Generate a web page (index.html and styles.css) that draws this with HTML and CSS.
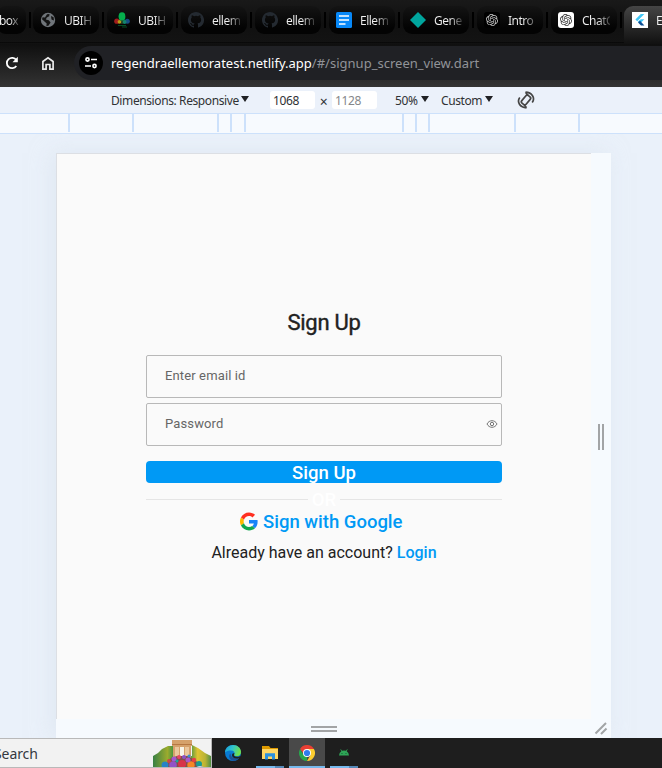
FILE: index.html
```html
<!DOCTYPE html>
<html lang="en">
<head>
<meta charset="utf-8">
<title>Sign Up</title>
<link rel="stylesheet" href="styles.css">
</head>
<body>
<svg class="defs" width="0" height="0">
  <symbol id="github" viewBox="0 0 16 16"><path fill="#242a31" d="M8 0C3.58 0 0 3.58 0 8c0 3.54 2.29 6.53 5.47 7.59.4.07.55-.17.55-.38v-1.49c-2.01.37-2.53-.49-2.69-.94-.09-.23-.48-.94-.82-1.13-.28-.15-.68-.52-.01-.53.63-.01 1.08.58 1.23.82.72 1.21 1.87.87 2.33.66.07-.52.28-.87.51-1.07-1.78-.2-3.64-.89-3.64-3.95 0-.87.31-1.59.82-2.15-.08-.2-.36-1.02.08-2.12 0 0 .67-.21 2.2.82a7.6 7.6 0 0 1 4 0c1.53-1.04 2.2-.82 2.2-.82.44 1.1.16 1.92.08 2.12.51.56.82 1.27.82 2.15 0 3.07-1.87 3.75-3.65 3.95.29.25.54.73.54 1.48v2.2c0 .21.15.46.55.38A8 8 0 0 0 8 0z"/></symbol>
  <symbol id="knot" viewBox="0 0 24 24"><path fill="currentColor" d="M22.28 9.82a5.98 5.98 0 0 0-.52-4.91 6.05 6.05 0 0 0-6.51-2.9A6.07 6.07 0 0 0 4.98 4.18a5.98 5.98 0 0 0-4 2.9 6.05 6.05 0 0 0 .75 7.1 5.98 5.98 0 0 0 .51 4.91 6.05 6.05 0 0 0 6.51 2.9A5.98 5.98 0 0 0 13.26 24a6.06 6.06 0 0 0 5.77-4.2 5.99 5.99 0 0 0 4-2.9 6.06 6.06 0 0 0-.75-7.08zm-9.02 12.61a4.48 4.48 0 0 1-2.88-1.04l.14-.08 4.78-2.76a.8.8 0 0 0 .39-.68v-6.74l2.02 1.17.04.05v5.58a4.5 4.5 0 0 1-4.49 4.5zM3.6 18.3a4.47 4.47 0 0 1-.53-3.01l.14.08 4.78 2.76a.77.77 0 0 0 .78 0l5.84-3.37v2.33l-.03.06L9.74 19.95A4.5 4.5 0 0 1 3.6 18.3zM2.34 7.9a4.48 4.48 0 0 1 2.37-1.97v5.67a.77.77 0 0 0 .39.68l5.81 3.35-2.02 1.17h-.07l-4.83-2.79A4.5 4.5 0 0 1 2.34 7.87zm16.6 3.85-5.83-3.38 2.01-1.17h.07l4.83 2.79a4.49 4.49 0 0 1-.67 8.11v-5.68a.79.79 0 0 0-.41-.67zm2.01-3.02-.14-.08-4.77-2.78a.78.78 0 0 0-.79 0L9.41 9.23V6.9l.03-.06 4.83-2.79a4.5 4.5 0 0 1 6.68 4.66zM8.31 12.86l-2.02-1.16-.04-.06V6.07a4.5 4.5 0 0 1 7.38-3.45l-.14.08-4.78 2.76a.8.8 0 0 0-.39.68zm1.1-2.36 2.6-1.5 2.61 1.5v3l-2.6 1.5-2.61-1.5z"/></symbol>
</svg>
<header class="tabs">
  <div class="tab first"><span>box</span></div>
  <div class="tab"><svg viewBox="0 0 16 16"><circle cx="8" cy="8" r="7.2" fill="#70757a"/><path fill="#141414" d="M7 2.2 9.5 2l-.3 2.2-2.4 1.2-1 2.1 3 .7 1.8 2.2-2.2 3.3-2 .3.3-2.6L4.5 9.6 2 7.2 2.6 5.2 5 5.5zM11 4l2.6 1.3.3 3.2-2.4-1z"/></svg><span>UBIH</span></div>
  <div class="tab"><svg viewBox="0 0 16 16"><circle cx="2.8" cy="9.2" r="2.6" fill="#a11c1c"/><circle cx="13.3" cy="9.2" r="2.5" fill="#164c83"/><circle cx="5.5" cy="9.8" r="1.9" fill="#b49b16"/><circle cx="10.5" cy="10" r="2" fill="#14846c"/><ellipse cx="8" cy="4.5" rx="3.4" ry="4.3" fill="#05ae4d"/><path d="M8 8v4" stroke="#35663b"/><path d="M4 13.5h8M8 15h5" stroke="#064d25"/></svg><span>UBIH</span></div>
  <div class="tab"><svg><use href="#github"/></svg><span>ellem</span></div>
  <div class="tab"><svg><use href="#github"/></svg><span>ellem</span></div>
  <div class="tab"><svg viewBox="0 0 16 16"><rect width="16" height="16" rx="1.5" fill="#0788f8"/><path d="M3 4h10M3 8h10M3 12h6.5" stroke="#fff" stroke-width="1.7"/></svg><span>Ellem</span></div>
  <div class="tab"><svg viewBox="0 0 16 16"><path d="m8 0 8 8-8 8-8-8z" fill="#00a59d"/></svg><span>Gene</span></div>
  <div class="tab"><svg class="knot dark"><use href="#knot"/></svg><span>Intro</span></div>
  <div class="tab"><svg class="knot light"><use href="#knot"/></svg><span>ChatG</span></div>
  <div class="tab active"><svg viewBox="0 0 16 16"><path fill="#fff" d="M0 0h16v16H0z"/><path fill="#41c7f5" d="M8.8 2h3.6L5.2 9.2 3.4 7.4zM8.8 7.3h3.6l-3 3-2.4.2-1-1z"/><path fill="#0b4f96" d="m6 10.5 2-1.8 4.4 4.8H9z"/></svg><span>E</span></div>
</header>
<nav class="toolbar">
  <svg class="reload" viewBox="0 0 14 14"><path d="M11.3 10A5.2 5.2 0 1 1 11.3 4" fill="none" stroke="#fff" stroke-width="1.8"/><path fill="#fff" d="M12.8.8v5.4H7.500z"/></svg>
  <svg class="home" viewBox="0 0 14 15"><path d="M1.9 13.2V5.5L7 1.700l5.100 3.800v7.700H8.900V8.500H5.100v4.700z" fill="none" stroke="#e9e9e9" stroke-width="1.7"/></svg>
  <div class="omnibox">
    <div class="site"><svg viewBox="0 0 14 14"><g fill="none" stroke="#fff" stroke-width="1.6"><circle cx="3.5" cy="3.5" r="1.6"/><path d="M7 3.5h6M1 10h6"/><circle cx="10.5" cy="10" r="1.6"/></g></svg></div>
    <p class="url"><b>regendraellemoratest.netlify.app</b><span>/#/signup_screen_view.dart</span></p>
  </div>
</nav>
<div class="devbar">
  <span class="dim">Dimensions: Responsive</span><i class="caret"></i>
  <span class="num w">1068</span><span class="times">×</span><span class="num h">1128</span>
  <span class="zoom">50%</span><i class="caret"></i>
  <span class="custom">Custom</span><i class="caret"></i>
  <svg class="rotate" viewBox="0 0 18 18"><g fill="none" stroke="#454545" stroke-width="1.7"><rect x="6.2" y="4" width="5.6" height="10" rx="1.8" transform="rotate(40 9 9)"/><path d="M2.8 6.5C-.5 11 3 16.5 9.5 16.8M9.5 16.8 7 13.6M15.2 11.5C18.5 7 15 1.5 8.5 1.2M8.5 1.2 11 4.4"/></g></svg>
</div>
<div class="ruler"><i></i><i></i><i></i><i></i><i></i><i></i><i></i><i></i><i></i><i></i></div>
<main class="stage">
  <div class="device">
    <section class="page">
      <form class="form">
        <h1>Sign Up</h1>
        <div class="field">Enter email id</div>
        <div class="field">Password<svg viewBox="0 0 12 10"><g fill="none" stroke="#757575"><path d="M1 5c2.2-4.4 7.8-4.4 10 0-2.2 4.4-7.8 4.4-10 0z"/><circle cx="6" cy="5" r="1.7"/></g></svg></div>
        <div class="submit">Sign Up</div>
        <div class="or"><i></i><span>OR</span><i></i></div>
        <div class="google"><svg viewBox="0 0 48 48"><path fill="#ff2f20" d="M24 9.5c3.54 0 6.71 1.22 9.21 3.6l6.85-6.85C35.9 2.38 30.47 0 24 0 14.62 0 6.51 5.38 2.56 13.22l7.98 6.19C12.43 13.72 17.74 9.5 24 9.5z"/><path fill="#1683f8" d="M46.98 24.55c0-1.57-.15-3.09-.38-4.55H24v9.02h12.94c-.58 2.96-2.26 5.48-4.78 7.18l7.73 6c4.51-4.18 7.09-10.36 7.09-17.65z"/><path fill="#ffb900" d="M10.53 28.59A14.5 14.5 0 0 1 9.77 24c0-1.6.27-3.14.76-4.59l-7.98-6.19a24 24 0 0 0 0 21.56z"/><path fill="#11a750" d="M24 48c6.48 0 11.93-2.13 15.89-5.81l-7.73-6c-2.15 1.45-4.92 2.3-8.16 2.3-6.26 0-11.57-4.22-13.47-9.91l-7.98 6.19C6.51 42.62 14.62 48 24 48z"/></svg><span>Sign with Google</span></div>
        <p class="login">Already have an account? <b>Login</b></p>
      </form>
    </section>
    <div class="grip right"><i></i><i></i></div>
    <div class="grip bottom"><i></i><i></i></div>
    <svg class="corner" viewBox="0 0 14 14"><path d="M1.5 12.5 12 2M7 13l5.5-5.5" stroke="#a2a4a6" stroke-width="2"/></svg>
  </div>
</main>
<footer class="taskbar">
  <div class="search"><span>Search</span>
    <svg viewBox="0 0 58 28"><defs><linearGradient id="hill"><stop stop-color="#398044"/><stop offset=".25" stop-color="#9cab2d"/><stop offset=".36" stop-color="#3e9143"/><stop offset=".65" stop-color="#529641"/><stop offset=".77" stop-color="#e0c431"/><stop offset=".9" stop-color="#b9b333"/><stop offset="1" stop-color="#528f45"/></linearGradient></defs><path fill="url(#hill)" d="M0 28V16l5-3 4-4 6-3h5v10h19V5l6 3 7 5 6 3v12z"/><path fill="#d5a16b" d="M19 0h20v6h-1v12H20V6h-1z"/><path fill="#b67843" d="M19 4h20v1H19z"/><path fill="#ebc79c" d="M22 7h4v10h-4zM32 7h4v10h-4z"/><path fill="#f7f4e9" d="M27 7h4v11h-4z"/><path fill="#80504b" d="m18 18 6-2h11l8 5 8 7H10z"/><g><circle cx="12" cy="25" r="3.5" fill="#2883c5"/><circle cx="20" cy="25" r="3.8" fill="#9152c7"/><circle cx="29" cy="24" r="4" fill="#d83349"/><circle cx="38" cy="25" r="3.7" fill="#f68623"/><circle cx="46" cy="24" r="3" fill="#1b9a91"/><circle cx="21" cy="19" r="2.5" fill="#a358d1"/><circle cx="26" cy="17" r="2" fill="#e84564"/><circle cx="31" cy="17" r="2" fill="#8c50c8"/><circle cx="35" cy="20" r="2.5" fill="#ae56c9"/><circle cx="41" cy="20" r="2.2" fill="#e73f43"/><circle cx="16" cy="21" r="2" fill="#cf4545"/><circle cx="24" cy="21" r="1.5" fill="#18a6a0"/><circle cx="36" cy="16" r="1.5" fill="#378cd3"/></g><path fill="#c9d1e9" d="M42 28q5-4 10 0z"/></svg>
  </div>
  <div class="app edge"><svg viewBox="0 0 16 16"><defs><linearGradient id="edge" x2="1" y2=".3"><stop stop-color="#179bdc"/><stop offset=".5" stop-color="#30c4cd"/><stop offset="1" stop-color="#70e04d"/></linearGradient></defs><circle cx="8" cy="8" r="8" fill="#087bd2"/><path fill="url(#edge)" d="M0 7.5C0 3 4 0 8 0c5 0 8 3.5 8 7 0 3-2 4.2-4.5 4.2C9 11.2 9 10 9.5 9c.6-2-1-3.6-3.3-3.6C3.5 5.4 1 6 0 7.5z"/><path fill="#1d4f95" d="M5.5 8.5c0 4 3.5 5.5 8.6 4.3C11 17.2 5 16.5 4.2 12c-.2-1.5.3-2.7 1.3-3.5z"/><path fill="#1e2023" d="M9.6 8.5c-1.8 2 .2 4.2 5.4 2.7l1 .8-1.8 1.2c-4.5 1.2-7.2-1-7.2-3 0-1.5 1-2.4 2.6-1.7z"/></svg></div>
  <div class="app running"><svg viewBox="0 0 16 16"><path fill="#de9a00" d="M0 1h7l1.5 2H16v3H0z"/><path fill="#ffd664" d="M0 4h16v10H0z"/><path fill="#2c91de" d="M3 14.5V8.2h10v6.3h-3v-3H6v3z"/></svg></div>
  <div class="app current"><svg viewBox="0 0 16 16"><path fill="#e93f34" d="M1.07 4A8 8 0 0 1 14.93 4H8L5 9.5z"/><path fill="#28a54c" d="M1.07 4 4.7 10 8 12v4A8 8 0 0 1 1.07 4z"/><path fill="#fccd2f" d="M14.93 4A8 8 0 0 1 8 16l3.5-6L8 4z"/><circle cx="8" cy="8" r="4" fill="#fff"/><circle cx="8" cy="8" r="3.1" fill="#307cec"/></svg></div>
  <div class="app running"><svg class="droid" viewBox="0 0 10 7"><path fill="#2fa657" d="M0 6.5Q.2 3.5 2.3 2.3L1.3.5l.6-.3 1.1 1.6q2-.7 4 0L8.1.2l.6.3-1 1.8Q9.8 3.5 10 6.5z"/><circle cx="3" cy="4.5" r=".6" fill="#153"/><circle cx="7" cy="4.5" r=".6" fill="#153"/></svg></div>
</footer>
</body>
</html>
```

FILE: styles.css
```css
* { box-sizing: border-box; }
body { margin: 0; width: 662px; height: 768px; overflow: hidden; background: #eaf1fa; font-family: "Noto Sans", "Open Sans", sans-serif; display: flex; flex-direction: column; }
svg { display: block; flex: none; }
i { display: block; flex: none; }
.defs { position: absolute; }
p, h1 { margin: 0; }

.tabs { height: 44px; flex: none; display: flex; background: linear-gradient(#191919, #101010 24px, #131313 42px, #000 43px, #222 44px); overflow: hidden; }
.tab { position: relative; width: 66px; height: 28px; margin: 6px 4px; flex: none; border-radius: 9px; background: linear-gradient(#141414, #030303 22px); display: flex; align-items: center; padding: 0 7px; gap: 8px; }
.tab::after { content: ""; position: absolute; right: -5px; top: 6px; width: 2px; height: 16px; background: #000; }
.tab svg { width: 16px; height: 16px; }
.tab span { width: 28px; flex: none; overflow: hidden; white-space: nowrap; font-size: 12px; letter-spacing: -.5px; line-height: 18px; padding-top: 1px; color: transparent; background: linear-gradient(90deg, #f2f2f2 55%, #3b3b3b 100%); background-clip: text; -webkit-background-clip: text; }
.tab.first { width: 29px; margin-left: -3px; margin-right: 3px; padding-left: 2px; }
.tab.first span { width: 20px; letter-spacing: -.6px; }
.tab.active { width: 60px; height: 38px; margin: 6px 0 0 3px; padding: 0 8px 10px; gap: 8px; background: linear-gradient(#454545, #111); border-radius: 9px 0 0 0; }
.tab.active::after { display: none; }
.tab .knot { border-radius: 3px; padding: 2px; }
.knot.dark { background: #000; color: #c8c8c8; }
.knot.light { background: #fff; color: #333; }

.toolbar { height: 43px; flex: none; display: flex; align-items: flex-start; background: linear-gradient(#0f0f0f, #333); }
.reload { width: 14px; height: 14px; margin: 12px 0 0 5px; }
.home { width: 14px; height: 15px; margin: 12px 0 0 22px; }
.omnibox { margin: 2px 0 0 19px; width: 588px; height: 34px; flex: none; border-radius: 17px 0 0 17px; background: #202125; display: flex; align-items: center; padding-left: 5px; }
.site { width: 24px; height: 24px; border-radius: 50%; background: #000; display: flex; align-items: center; justify-content: center; }
.site svg { width: 14px; height: 14px; }
.url { margin-left: 8px; white-space: nowrap; font-size: 13px; color: #919398; letter-spacing: .01px; }
.url b { font-weight: 400; color: #fff; }

.devbar { height: 26px; flex: none; display: flex; align-items: center; background: #ebf1fa; font-size: 12px; color: #303134; padding-left: 111px; white-space: nowrap; }
.devbar span { flex: none; letter-spacing: -.4px; line-height: 18px; padding-top: 1px; height: 18px; }
.dim { width: 130px; }
.caret { border: 4px solid transparent; border-top: 6px solid #202124; border-bottom: 0; margin-top: -2px; width: 8px; }
.devbar .num { width: 45px; border-radius: 3px; background: #fff; padding-left: 3px; }
.num.w { margin-left: 21px; }
.devbar .num.h { color: #85878a; }
.devbar .times { width: 17px; text-align: center; padding-top: 2px; font-size: 14px; }
.zoom { width: 26px; margin-left: 18px; }
.custom { width: 44px; margin-left: 12px; }
.rotate { width: 18px; height: 18px; margin-left: 24px; }

.ruler { height: 21px; flex: none; border: solid #cde1fb; border-width: 1px 0; background: #f7fafe; display: flex; padding-left: 68px; }
.ruler i { width: 2px; height: 18px; background: #cde1fb; margin-right: 62px; }
.ruler i:nth-child(2) { margin-right: 83px; }
.ruler i:nth-child(3) { margin-right: 11px; }
.ruler i:nth-child(4) { margin-right: 12px; }
.ruler i:nth-child(5) { margin-right: 156px; }
.ruler i:nth-child(6), .ruler i:nth-child(7) { margin-right: 11px; }
.ruler i:nth-child(8) { margin-right: 84px; }

.stage { height: 604px; flex: none; padding: 19px 0 0 56px; overflow: hidden; }
.device { position: relative; width: 555px; height: 585px; display: grid; grid-template: 566px 19px / 535px 20px; background: #f6fafe; box-shadow: -4px 0 20px #d6dfeb88; }
.page { background: #fafafa; border: solid #dcdfe4; border-width: 1px 0 0 1px; padding: 154px 0 0 89px; }
.grip { display: flex; align-items: center; justify-content: center; gap: 2px; }
.grip i { background: #a2a4a6; width: 2px; height: 26px; }
.right { padding-top: 2px; }
.bottom { flex-direction: column; }
.bottom i { width: 26px; height: 2px; }
.corner { width: 14px; height: 14px; align-self: center; justify-self: center; margin-top: -2px; }

.form { width: 356px; font-family: Roboto, sans-serif; color: #212121; }
h1 { text-align: center; font-size: 22px; font-weight: 400; line-height: 29px; height: 47px; letter-spacing: -.3px; -webkit-text-stroke: .4px; }
.field { height: 43px; border: 1px solid #b8b8b8; border-radius: 2px; margin-bottom: 5px; padding: 0 3px 2px 18px; font-size: 13px; letter-spacing: .13px; color: #666; display: flex; align-items: center; justify-content: space-between; }
.field svg { width: 12px; height: 10px; margin-top: 1px; }
.submit { height: 22px; margin-top: 15px; border-radius: 4px; background: #0099f5; color: #fff; text-align: center; font-size: 18.5px; font-weight: 500; line-height: 24px; }
.or { height: 22px; margin-top: 6px; display: flex; align-items: center; justify-content: space-between; }
.or i { width: 162px; height: 1px; background: #e5e5e5; margin-bottom: 1px; }
.or span { color: #fff; font-size: 18.5px; font-weight: 500; }
.google { display: flex; align-items: center; gap: 5px; height: 22px; margin: 0 0 0 94px; color: #0099f5; font-size: 18.5px; font-weight: 500; white-space: nowrap; }
.google svg { width: 18px; height: 19px; margin-top: -1px; }
.login { margin-top: 9px; line-height: 22px; font-size: 16px; text-align: center; white-space: nowrap; }
.login b { color: #0099f5; font-weight: 500; }

.taskbar { height: 30px; flex: none; display: flex; background: #1e1e1e; }
.search { width: 212px; height: 30px; background: #f2f2f2; border: solid #b9b9b9; border-width: 1px 1px 1px 0; display: flex; align-items: flex-start; justify-content: space-between; font-size: 14px; line-height: 29px; color: #343840; overflow: hidden; }
.search span { margin-left: -6px; letter-spacing: -.1px; }
.search svg { width: 58px; height: 28px; margin-top: 1px; }
.app { width: 28px; height: 30px; display: flex; justify-content: center; padding-top: 7px; margin-left: 9px; }
.app svg { width: 16px; height: 16px; }
.edge { margin-left: 7px; }
.running { background: linear-gradient(90deg, #76b9ed 19px, #5589b8 19px) bottom / 100% 2px no-repeat; }
.current { width: 36px; margin-left: 5px; background: #494949; border-bottom: 2px solid #76b9ed; }
.current + .app { margin-left: 5px; }
.app .droid { width: 10px; height: 7px; margin-top: 4px; }
```
